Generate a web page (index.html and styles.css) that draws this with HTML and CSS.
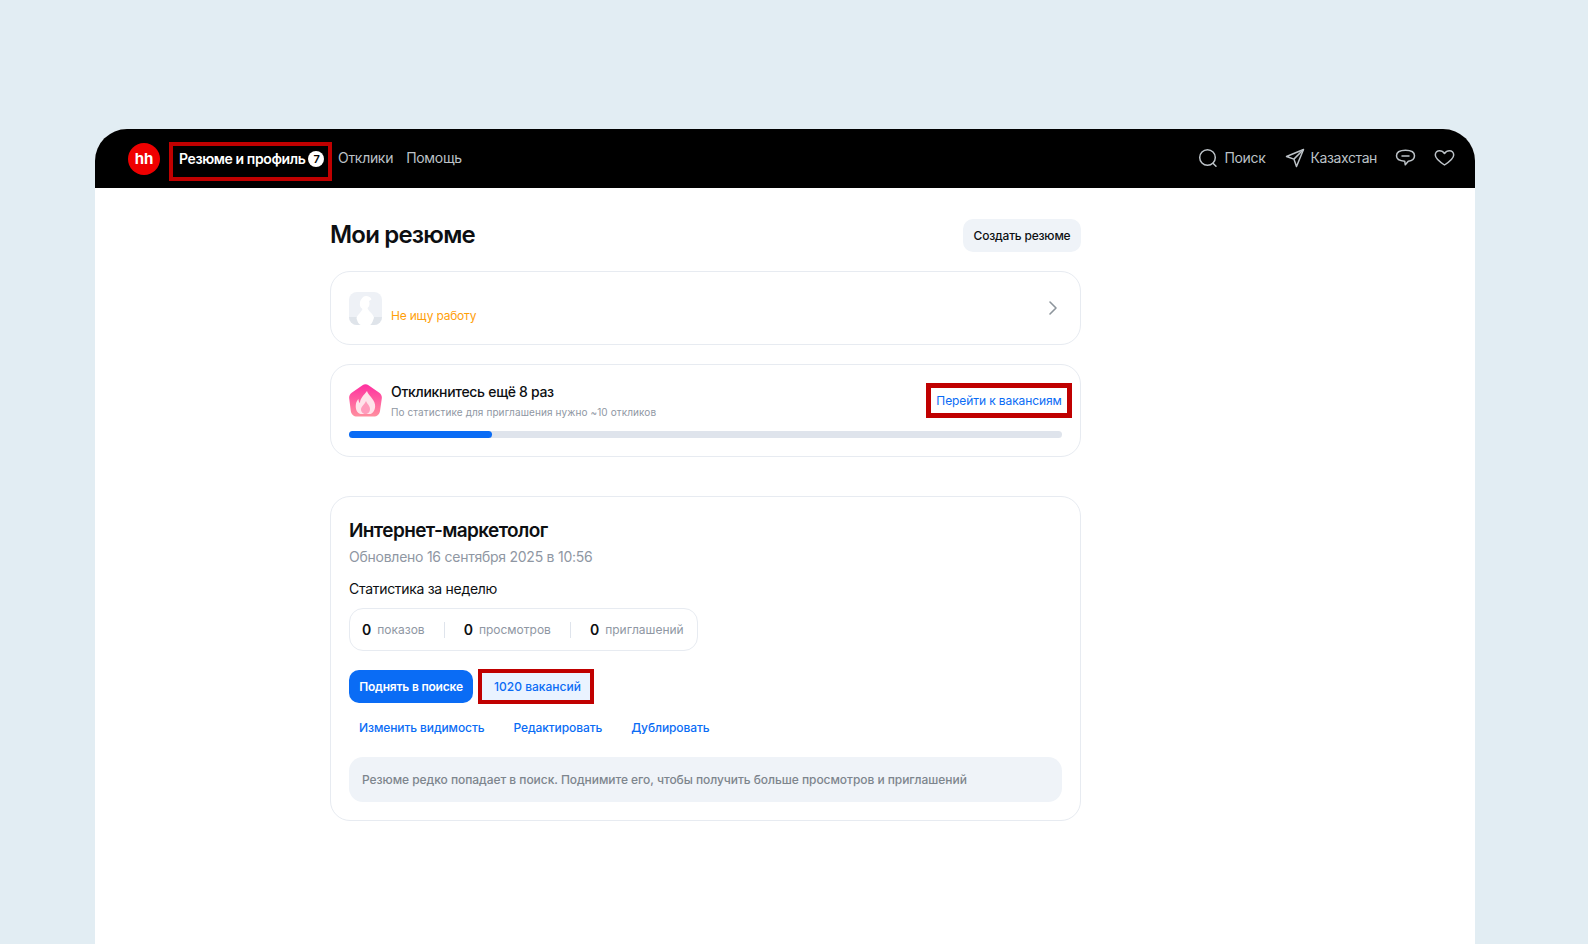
FILE: index.html
```html
<!DOCTYPE html>
<html lang="ru">
<head>
  <meta charset="UTF-8">
  <title>Мои резюме</title>
  <link rel="stylesheet" href="styles.css">
</head>
<body>
  <div class="window">
    <header class="topbar">
      <div class="logo">hh</div>
      <nav class="nav">
        <a class="nav-item nav-current">Резюме и профиль <span class="nav-badge">7</span></a>
        <a class="nav-item">Отклики</a>
        <a class="nav-item">Помощь</a>
      </nav>
      <div class="topbar-right">
        <a class="tool tool-search">
          <svg width="20" height="20" viewBox="0 0 20 20" fill="none" stroke="#bcc2c7" stroke-width="1.5" stroke-linecap="round"><circle cx="9.5" cy="9.5" r="7.8"/><path d="M15 15.2l3 3"/></svg>
          Поиск
        </a>
        <a class="tool tool-region">
          <svg width="20" height="20" viewBox="0 0 20 20" fill="none" stroke="#bcc2c7" stroke-width="1.5" stroke-linejoin="round"><path d="M18.5 1.5L1.5 8.5l7.4 2.6 2.6 7.4z"/><path d="M8.9 11.1l9.6-9.6"/></svg>
          Казахстан
        </a>
        <a class="tool tool-chat">
          <svg width="21" height="20" viewBox="0 0 21 20" fill="none" stroke="#bcc2c7" stroke-width="1.5" stroke-linecap="round" stroke-linejoin="round"><path d="M10.5 2.2c5 0 9 1.9 9 5.6 0 3.2-2.7 5-6.2 5.4l-3 3.6-.6-3.6C5 13 1.5 11.200 1.500 7.800c0-3.700 4-5.600 9-5.600z"/><path d="M7 8h7"/></svg>
        </a>
        <a class="tool">
          <svg width="21" height="20" viewBox="0 0 21 20" fill="none" stroke="#bcc2c7" stroke-width="1.5" stroke-linejoin="round"><path d="M10.500 17C6 14 1.300 10.500 1.300 7c0-2.600 2-4.300 4.300-4.300 2.100 0 3.700 1 4.900 2.800 1.200-1.800 2.800-2.800 4.900-2.800 2.300 0 4.300 1.700 4.300 4.300 0 3.500-4.700 7-9.200 10z"/></svg>
        </a>
      </div>
    </header>

    <main class="content">
      <div class="title-row">
        <h1>Мои резюме</h1>
        <a class="create-btn">Создать резюме</a>
      </div>

      <section class="card status-card">
        <svg class="status-avatar" width="33" height="33" viewBox="0 0 33 33">
          <rect width="33" height="33" rx="8" fill="#eef1f6"/>
          <path d="M0 25h33a8 8 0 0 1-8 8H8a8 8 0 0 1-8-8z" fill="#dfe4ea"/>
          <path d="M17 4c2.500 0 5 1.500 5.500 3.500l-2.500 1.500c1 2.500.500 5.500-1.500 7 .500 3 5 5 6.500 9.500-1 4-3 7.500-4 7.500h-9c-2 0-4-4-4.500-7 1.500-4 5-6 6-9-2.500-1.500-3-4-2.500-6.500C11.500 7.500 14 4 17 4z" fill="#fff"/>
        </svg>
        <span class="status-text">Не ищу работу</span>
        <svg class="chevron" width="10" height="16" viewBox="0 0 10 16" fill="none" stroke="#8d959c" stroke-width="1.600" stroke-linecap="round" stroke-linejoin="round"><path d="M2 2l6 6-6 6"/></svg>
      </section>

      <section class="card goal-card">
        <div class="goal-row">
          <svg class="goal-icon" width="33" height="33" viewBox="0 0 33 33">
            <defs>
              <linearGradient id="flameBg" x1="0" y1="0" x2="0" y2="1">
                <stop offset="0" stop-color="#ff2fa0"/>
                <stop offset="1" stop-color="#ff8f9f"/>
              </linearGradient>
            </defs>
            <path d="M13.500 1.200c1.800-1.300 4.200-1.300 6 0l10.800 7.600c1.900 1.400 2.800 3.500 2.500 5.600l-1.800 12.500c-.400 3.200-3 5.600-6.200 5.600H8c-3.200 0-5.800-2.400-6.200-5.600L.2 14.400c-.300-2.100.600-4.200 2.500-5.600z" fill="url(#flameBg)"/>
            <path d="M18 7c1 4 7 7.500 8 13.500.7 4.500-1.500 8.500-4.500 9.500h-10C8 29 6 25 7 19.500c.5-2 1.500-3.500 2.500-4.500 0 2 .5 3.500 1.500 4C11 14.500 15 11 18 7z" fill="#ffe3ea"/>
            <path d="M17 17c1 3 4 4.500 4 8 0 2.500-1.500 5-4.500 5S12 27.500 12 25.500c0-3 3.500-5 5-8.500z" fill="#ff9cbc"/>
          </svg>
          <div class="goal-text">
            <div class="goal-title">Откликнитесь ещё 8 раз</div>
            <div class="goal-sub">По статистике для приглашения нужно ~10 откликов</div>
          </div>
          <a class="goal-link">Перейти к вакансиям</a>
        </div>
        <div class="progress"><div class="progress-fill" style="width: 20%"></div></div>
      </section>

      <section class="card resume-card">
        <h2>Интернет-маркетолог</h2>
        <div class="updated">Обновлено 16 сентября 2025 в 10:56</div>
        <div class="stats-label">Статистика за неделю</div>
        <div class="stats">
          <div class="stat"><b>0</b> показов</div>
          <div class="stat"><b>0</b> просмотров</div>
          <div class="stat"><b>0</b> приглашений</div>
        </div>
        <div class="actions">
          <a class="btn-primary">Поднять в поиске</a>
          <a class="btn-vacancies">1020 вакансий</a>
        </div>
        <div class="links">
          <a>Изменить видимость</a>
          <a>Редактировать</a>
          <a>Дублировать</a>
        </div>
        <div class="note">Резюме редко попадает в поиск. Поднимите его, чтобы получить больше просмотров и приглашений</div>
      </section>
    </main>
  </div>
</body>
</html>
```

FILE: styles.css
```css
* {
  box-sizing: border-box;
}

html, body {
  height: 944px;
  overflow: hidden;
}

body {
  margin: 0;
  padding: 129px 113px 0 95px;
  background: #e2edf3;
  font-family: Inter, "Noto Sans", sans-serif;
  color: #0d0f12;
}

.window {
  height: 815px;
  background: #fff;
  border-radius: 32px 32px 0 0;
  overflow: hidden;
}

/* top bar */
.topbar {
  display: flex;
  align-items: center;
  height: 59px;
  padding: 0 20px 0 33px;
  background: #000;
}

.logo {
  display: flex;
  align-items: center;
  justify-content: center;
  width: 32px;
  height: 32px;
  margin-right: 9px;
  border-radius: 50%;
  background: #ef0000;
  color: #fff;
  font-size: 15px;
  font-weight: 700;
}

.nav {
  display: flex;
  align-items: center;
  gap: 13px;
}

.nav-item {
  padding-bottom: 2px;
  font-size: 14px;
  letter-spacing: -0.3px;
  color: #bcc2c7;
}

.nav-current {
  display: flex;
  align-items: center;
  gap: 3px;
  width: 163px;
  height: 39px;
  margin-top: 6px;
  margin-right: -7px;
  padding-bottom: 6px;
  padding-left: 6px;
  border: 4px solid #c00000;
  color: #fff;
  font-weight: 600;
  letter-spacing: -0.4px;
  white-space: nowrap;
}

.nav-badge {
  display: flex;
  align-items: center;
  justify-content: center;
  width: 16px;
  height: 16px;
  border-radius: 50%;
  background: #fff;
  color: #000;
  font-size: 11px;
  font-weight: 600;
}

.topbar-right {
  display: flex;
  align-items: center;
  margin-left: auto;
}

.tool {
  display: flex;
  align-items: center;
  gap: 6px;
  padding-bottom: 2px;
  font-size: 14px;
  letter-spacing: -0.3px;
  color: #bcc2c7;
}

.tool-search {
  margin-right: 19px;
}

.tool-region {
  margin-right: 18px;
  letter-spacing: -0.4px;
}

.tool-chat {
  margin-right: 18px;
}

/* content */
.content {
  display: flex;
  flex-direction: column;
  width: 751px;
  margin-left: 235px;
}

.title-row {
  display: flex;
  align-items: center;
  justify-content: space-between;
  height: 33px;
  margin-top: 31px;
  margin-bottom: 19px;
}

h1 {
  margin: 0 0 2px;
  font-size: 24px;
  font-weight: 600;
  letter-spacing: -0.8px;
}

.create-btn {
  display: flex;
  align-items: center;
  justify-content: center;
  width: 118px;
  height: 33px;
  border-radius: 10px;
  background: #eff3f8;
  font-size: 12px;
  font-weight: 500;
  letter-spacing: -0.2px;
}

.card {
  border: 1px solid #e7ebf1;
  border-radius: 20px;
  background: #fff;
}

.status-card {
  display: flex;
  align-items: center;
  height: 74px;
  margin-bottom: 19px;
  padding: 0 19px 0 18px;
}

.status-text {
  align-self: flex-end;
  margin-bottom: 21px;
  margin-left: 9px;
  font-size: 12px;
  letter-spacing: -0.2px;
  color: #ff9f0a;
}

.chevron {
  margin-left: auto;
  margin-right: 3px;
}

.goal-card {
  height: 93px;
  margin-bottom: 39px;
  padding: 18px 18px 0;
}

.goal-row {
  display: flex;
  align-items: center;
  height: 34px;
  margin-bottom: 14px;
}

.goal-text {
  margin-left: 9px;
}

.goal-title {
  font-size: 14px;
  font-weight: 500;
  letter-spacing: -0.3px;
  line-height: 17px;
}

.goal-sub {
  margin-top: 6px;
  font-size: 10px;
  letter-spacing: 0.1px;
  line-height: 12px;
  color: #8f97a3;
}

.goal-link {
  display: flex;
  align-items: center;
  justify-content: center;
  width: 146px;
  height: 35px;
  margin-left: auto;
  margin-right: -10px;
  border: 5px solid #c00000;
  font-size: 12px;
  letter-spacing: -0.1px;
  color: #0a6cf5;
  white-space: nowrap;
}

.progress {
  height: 7px;
  border-radius: 4px;
  background: #dfe4ec;
}

.progress-fill {
  height: 7px;
  border-radius: 4px;
  background: #0a6cf5;
}

.resume-card {
  height: 325px;
  padding: 21px 18px 0;
}

h2 {
  margin: 0;
  font-size: 19px;
  font-weight: 600;
  letter-spacing: -0.6px;
  line-height: 26px;
}

.updated {
  margin-top: 3px;
  font-size: 14px;
  letter-spacing: -0.25px;
  line-height: 20px;
  color: #8f97a3;
}

.stats-label {
  margin-top: 12px;
  font-size: 14px;
  letter-spacing: -0.3px;
  line-height: 20px;
}

.stats {
  display: flex;
  align-items: center;
  width: 349px;
  height: 43px;
  margin-top: 9px;
  padding: 0 12px;
  border: 1px solid #e7ebf1;
  border-radius: 14px;
}

.stat {
  display: flex;
  align-items: center;
  gap: 6px;
  height: 16px;
  padding-right: 19px;
  font-size: 12px;
  color: #8f97a3;
}

.stat + .stat {
  padding-left: 19px;
  border-left: 1px solid #dfe4ec;
}

.stat:last-child {
  padding-right: 0;
}

.stat b {
  font-size: 14px;
  font-weight: 600;
  color: #0d0f12;
}

.actions {
  display: flex;
  align-items: center;
  gap: 5px;
  height: 35px;
  margin-top: 18px;
}

.btn-primary {
  display: flex;
  align-items: center;
  justify-content: center;
  width: 124px;
  height: 33px;
  border-radius: 10px;
  background: #0a6cf5;
  color: #fff;
  font-size: 12px;
  font-weight: 600;
  letter-spacing: -0.2px;
}

.btn-vacancies {
  display: flex;
  align-items: center;
  justify-content: center;
  width: 116px;
  height: 35px;
  padding-left: 3px;
  border: 4px solid #c00000;
  background: #eaf3ff;
  color: #0a6cf5;
  font-size: 12px;
  font-weight: 500;
}

.links {
  display: flex;
  gap: 29px;
  margin-top: 16px;
  padding-left: 10px;
  font-size: 12px;
  font-weight: 500;
  letter-spacing: -0.1px;
  line-height: 16px;
  color: #0a6cf5;
}

.note {
  display: flex;
  align-items: center;
  height: 45px;
  margin-top: 21px;
  padding-left: 13px;
  border-radius: 14px;
  background: #eff3f8;
  font-size: 12px;
  letter-spacing: -0.05px;
  font-weight: 500;
  color: #7d858d;
}
```
